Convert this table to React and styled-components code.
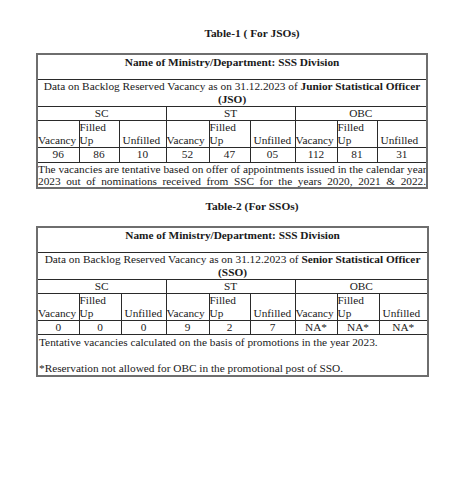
import React from "react";
import styled, { createGlobalStyle } from "styled-components";

const GlobalStyle = createGlobalStyle`
  body {
    margin: 0;
    background: #fff;
    font-family: "Liberation Serif", "Times New Roman", serif;
    color: #1a1a1a;
  }
`;

const tables = [
  {
    title: "Table-1 ( For JSOs)",
    post: "Junior Statistical Officer",
    short: "(JSO)",
    widths: [42, 40, 47, 43, 41, 45, 42, 40, 50],
    values: ["96", "86", "10", "52", "47", "05", "112", "81", "31"],
    justifyNote: true,
    notes: [
      "The vacancies are tentative based on offer of appointments issued in the calendar year",
      "2023 out of nominations received from SSC for the years 2020, 2021 & 2022.",
    ],
  },
  {
    title: "Table-2 (For SSOs)",
    post: "Senior Statistical Officer",
    short: "(SSO)",
    widths: [42, 42, 45, 43, 41, 45, 42, 42, 49],
    values: ["0", "0", "0", "9", "2", "7", "NA*", "NA*", "NA*"],
    justifyNote: false,
    notes: [
      "Tentative vacancies calculated on the basis of promotions in the year 2023.",
      "",
      "*Reservation not allowed for OBC in the promotional post of SSO.",
    ],
  },
];

const App = () => {
  return (
    <Page>
      <GlobalStyle />
      {tables.map((t) => (
        <Section key={t.title}>
          <Title>{t.title}</Title>
          <Table>
            <colgroup>
              {t.widths.map((w, i) => (
                <col key={i} style={{ width: w }} />
              ))}
            </colgroup>
            <tbody>
              <tr>
                <NameCell colSpan={9}>
                  <b>Name of Ministry/Department: SSS Division</b>
                </NameCell>
              </tr>
              <tr>
                <DataCell colSpan={9}>
                  Data on Backlog Reserved Vacancy as on 31.12.2023 of{" "}
                  <b>{t.post}</b>
                  <br />
                  <b>{t.short}</b>
                </DataCell>
              </tr>
              <tr>
                <GroupCell colSpan={3}>SC</GroupCell>
                <GroupCell colSpan={3}>ST</GroupCell>
                <GroupCell colSpan={3}>OBC</GroupCell>
              </tr>
              <tr>
                {[0, 1, 2].map((g) => (
                  <React.Fragment key={g}>
                    <HeadCell>Vacancy</HeadCell>
                    <HeadCell>
                      Filled
                      <br />
                      Up
                    </HeadCell>
                    <HeadCell $pad>Unfilled</HeadCell>
                  </React.Fragment>
                ))}
              </tr>
              <tr>
                {t.values.map((v, i) => (
                  <ValueCell key={i} $tall={t.justifyNote}>
                    {v}
                  </ValueCell>
                ))}
              </tr>
              <tr>
                <NoteCell colSpan={9} $justify={t.justifyNote}>
                  {t.notes.map((n, i) => (
                    <Note key={i} $justify={t.justifyNote}>
                      {n || "\u00a0"}
                    </Note>
                  ))}
                </NoteCell>
              </tr>
            </tbody>
          </Table>
        </Section>
      ))}
    </Page>
  );
};

export default App;

const Page = styled.div`
  width: 474px;
  padding: 27px 0 0 36px;
  box-sizing: border-box;
  font-size: 11.3px;
  line-height: 13px;
`;

const Section = styled.div`
  margin-bottom: 11px;
`;

const Title = styled.div`
  width: 390px;
  padding-left: 42px;
  box-sizing: border-box;
  text-align: center;
  font-weight: bold;
  font-size: 11.4px;
  line-height: 13px;
  margin-bottom: 13px;
`;

const Table = styled.table`
  width: 391px;
  border-collapse: collapse;
  table-layout: fixed;
  border: 2px solid #6e6e6e;

  td {
    border: 1px solid #2a2a2a;
    padding: 0;
    overflow: hidden;
    white-space: nowrap;
  }
`;

const NameCell = styled.td`
  text-align: center;
  vertical-align: top;
  && {
    padding: 1px 0 10px;
  }
`;

const DataCell = styled.td`
  text-align: center;
  vertical-align: top;
`;

const GroupCell = styled.td`
  text-align: center;
`;

const HeadCell = styled.td`
  vertical-align: bottom;
  text-align: left;
  && {
    padding-left: ${(p) => (p.$pad ? "3px" : "0")};
  }
`;

const ValueCell = styled.td`
  text-align: center;
  && {
    padding-bottom: ${(p) => (p.$tall ? "1px" : "0")};
  }
`;

const NoteCell = styled.td`
  vertical-align: top;
  && {
    white-space: normal;
    padding: ${(p) => (p.$justify ? "0" : "1px 0 0 1px")};
  }
`;

const Note = styled.div`
  line-height: ${(p) => (p.$justify ? "12px" : "13px")};
  text-align: ${(p) => (p.$justify ? "justify" : "left")};
  text-align-last: ${(p) => (p.$justify ? "justify" : "auto")};
  white-space: ${(p) => (p.$justify ? "nowrap" : "normal")};
`;
